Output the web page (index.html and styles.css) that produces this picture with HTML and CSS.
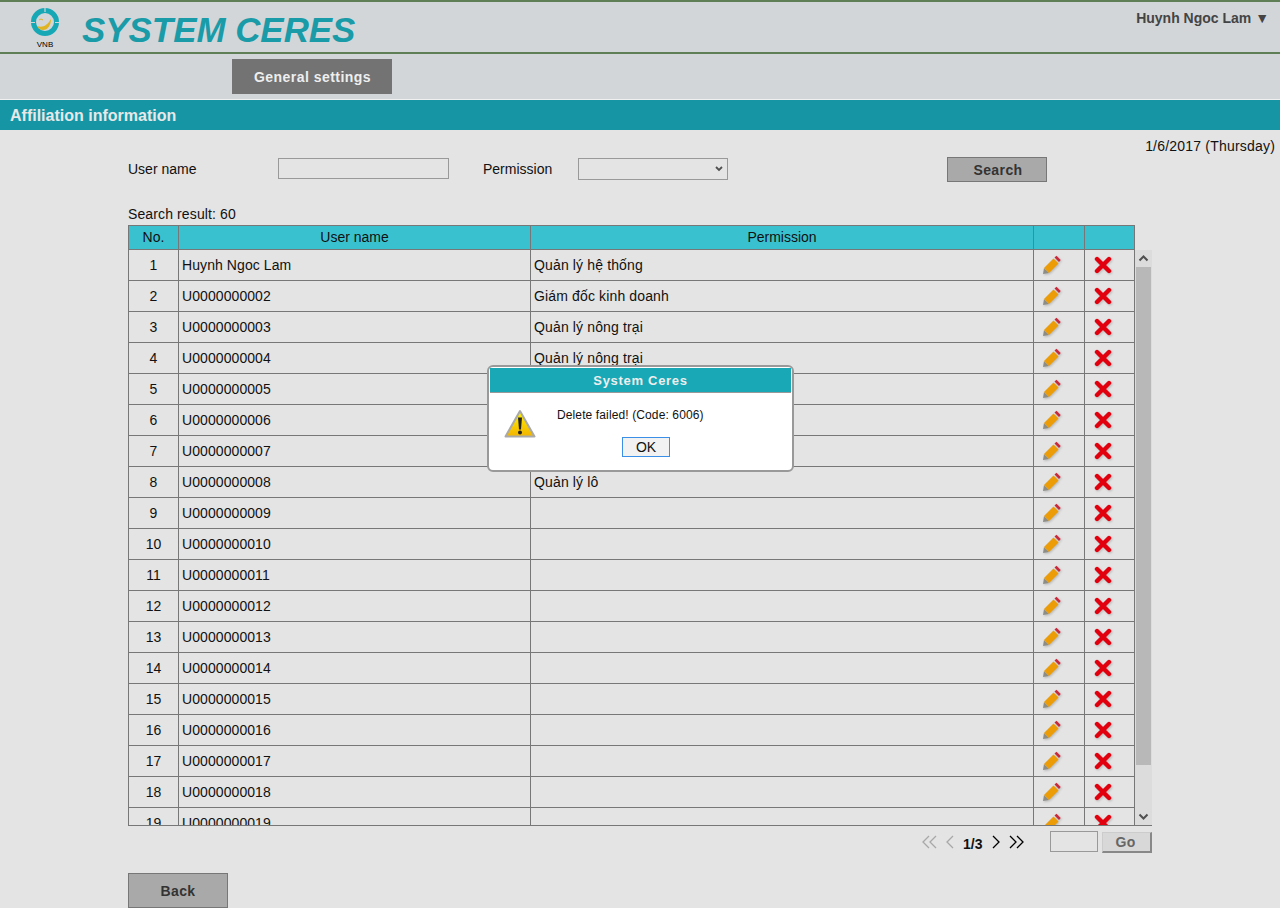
FILE: index.html

```html
<!DOCTYPE html>
<html lang="en">
<head>
  <meta charset="UTF-8" />
  <title>System Ceres</title>
  <link rel="stylesheet" href="styles.css">
</head>
<body>
  <svg class="sprites" width="0" height="0">
    <symbol id="pencil" viewBox="0 0 20 20">
      <polygon points="1,19 2,13 7,18" fill="#8d8d86"/>
      <polygon points="2,13 11.500,3.500 16.500,8.500 7,18" fill="#eb9c06"/>
      <polygon points="12.500,2.500 14.500,0.800 18.700,5 17,7" fill="#c9283a"/>
    </symbol>
    <symbol id="cross" viewBox="0 0 18 18">
      <path d="M3 3 L15 15 M15 3 L3 15" stroke="#e2000f" stroke-width="4.4" stroke-linecap="round"/>
    </symbol>
  </svg>

  <header class="top-bar">
    <svg class="logo" width="50" height="50" viewBox="0 0 50 50">
      <circle cx="25" cy="20" r="11.5" fill="none" stroke="#17a8b6" stroke-width="5"/>
      <path d="M10 20.5 H15 M35 20.5 H40 M25 5 V10" stroke="#d3d6d9" stroke-width="1.2"/>
      <path d="M17 24 C22 26 27 24 31 17 C31 23 28 28 23 28 C20 28 18 26 17 24Z" fill="#e0b420"/>
      <path d="M19 18 Q21 16 23 18" fill="none" stroke="#e0b420" stroke-width="1"/>
      <text x="25" y="45" class="logo-text">VNB</text>
    </svg>
    <div class="brand">SYSTEM CERES</div>
    <div class="user-menu">Huynh Ngoc Lam ▼</div>
  </header>

  <nav class="nav-bar">
    <a class="nav-item">General settings</a>
  </nav>

  <h1 class="page-title">Affiliation information</h1>

  <main class="content">
    <div class="date-line">1/6/2017 (Thursday)</div>

    <div class="search-row">
      <label class="lbl-user">User name</label>
      <input class="txt-user" type="text" />
      <label class="lbl-perm">Permission</label>
      <select class="sel-perm"><option></option></select>
      <button class="btn-search">Search</button>
    </div>

    <div class="result-count">Search result: 60</div>

    <table class="grid grid-head">
      <colgroup><col class="c-no"><col class="c-name"><col class="c-perm"><col class="c-act"><col class="c-del"></colgroup>
      <tr><th>No.</th><th>User name</th><th>Permission</th><th></th><th></th></tr>
    </table>

    <div class="grid-body">
      <div class="grid-view">
        <table class="grid">
          <colgroup><col class="c-no"><col class="c-name"><col class="c-perm"><col class="c-act"><col class="c-del"></colgroup>
          <tr><td class="no">1</td><td>Huynh Ngoc Lam</td><td>Quản lý hệ thống</td><td class="act"><svg class="ic-edit"><use href="#pencil"/></svg></td><td class="act"><svg class="ic-del"><use href="#cross"/></svg></td></tr>
          <tr><td class="no">2</td><td>U0000000002</td><td>Giám đốc kinh doanh</td><td class="act"><svg class="ic-edit"><use href="#pencil"/></svg></td><td class="act"><svg class="ic-del"><use href="#cross"/></svg></td></tr>
          <tr><td class="no">3</td><td>U0000000003</td><td>Quản lý nông trại</td><td class="act"><svg class="ic-edit"><use href="#pencil"/></svg></td><td class="act"><svg class="ic-del"><use href="#cross"/></svg></td></tr>
          <tr><td class="no">4</td><td>U0000000004</td><td>Quản lý nông trại</td><td class="act"><svg class="ic-edit"><use href="#pencil"/></svg></td><td class="act"><svg class="ic-del"><use href="#cross"/></svg></td></tr>
          <tr><td class="no">5</td><td>U0000000005</td><td></td><td class="act"><svg class="ic-edit"><use href="#pencil"/></svg></td><td class="act"><svg class="ic-del"><use href="#cross"/></svg></td></tr>
          <tr><td class="no">6</td><td>U0000000006</td><td></td><td class="act"><svg class="ic-edit"><use href="#pencil"/></svg></td><td class="act"><svg class="ic-del"><use href="#cross"/></svg></td></tr>
          <tr><td class="no">7</td><td>U0000000007</td><td></td><td class="act"><svg class="ic-edit"><use href="#pencil"/></svg></td><td class="act"><svg class="ic-del"><use href="#cross"/></svg></td></tr>
          <tr><td class="no">8</td><td>U0000000008</td><td>Quản lý lô</td><td class="act"><svg class="ic-edit"><use href="#pencil"/></svg></td><td class="act"><svg class="ic-del"><use href="#cross"/></svg></td></tr>
          <tr><td class="no">9</td><td>U0000000009</td><td></td><td class="act"><svg class="ic-edit"><use href="#pencil"/></svg></td><td class="act"><svg class="ic-del"><use href="#cross"/></svg></td></tr>
          <tr><td class="no">10</td><td>U0000000010</td><td></td><td class="act"><svg class="ic-edit"><use href="#pencil"/></svg></td><td class="act"><svg class="ic-del"><use href="#cross"/></svg></td></tr>
          <tr><td class="no">11</td><td>U0000000011</td><td></td><td class="act"><svg class="ic-edit"><use href="#pencil"/></svg></td><td class="act"><svg class="ic-del"><use href="#cross"/></svg></td></tr>
          <tr><td class="no">12</td><td>U0000000012</td><td></td><td class="act"><svg class="ic-edit"><use href="#pencil"/></svg></td><td class="act"><svg class="ic-del"><use href="#cross"/></svg></td></tr>
          <tr><td class="no">13</td><td>U0000000013</td><td></td><td class="act"><svg class="ic-edit"><use href="#pencil"/></svg></td><td class="act"><svg class="ic-del"><use href="#cross"/></svg></td></tr>
          <tr><td class="no">14</td><td>U0000000014</td><td></td><td class="act"><svg class="ic-edit"><use href="#pencil"/></svg></td><td class="act"><svg class="ic-del"><use href="#cross"/></svg></td></tr>
          <tr><td class="no">15</td><td>U0000000015</td><td></td><td class="act"><svg class="ic-edit"><use href="#pencil"/></svg></td><td class="act"><svg class="ic-del"><use href="#cross"/></svg></td></tr>
          <tr><td class="no">16</td><td>U0000000016</td><td></td><td class="act"><svg class="ic-edit"><use href="#pencil"/></svg></td><td class="act"><svg class="ic-del"><use href="#cross"/></svg></td></tr>
          <tr><td class="no">17</td><td>U0000000017</td><td></td><td class="act"><svg class="ic-edit"><use href="#pencil"/></svg></td><td class="act"><svg class="ic-del"><use href="#cross"/></svg></td></tr>
          <tr><td class="no">18</td><td>U0000000018</td><td></td><td class="act"><svg class="ic-edit"><use href="#pencil"/></svg></td><td class="act"><svg class="ic-del"><use href="#cross"/></svg></td></tr>
          <tr><td class="no">19</td><td>U0000000019</td><td></td><td class="act"><svg class="ic-edit"><use href="#pencil"/></svg></td><td class="act"><svg class="ic-del"><use href="#cross"/></svg></td></tr>
        </table>
      </div>
      <div class="scrollbar">
        <svg class="sb-btn" width="17" height="17" viewBox="0 0 17 17"><path d="M4.500 10.500 L8.500 6.500 L12.500 10.500" fill="none" stroke="#505050" stroke-width="2"/></svg>
        <div class="sb-track"><div class="sb-thumb"></div></div>
        <svg class="sb-btn" width="17" height="17" viewBox="0 0 17 17"><path d="M4.500 6.500 L8.500 10.500 L12.500 6.500" fill="none" stroke="#505050" stroke-width="2"/></svg>
      </div>
    </div>

    <div class="pager">
      <svg class="pg-first" width="16" height="14" viewBox="0 0 16 14"><path d="M8 1 L2 7 L8 13 M15 1 L9 7 L15 13" fill="none" stroke="#a8a8a8" stroke-width="1.300"/></svg>
      <svg class="pg-prev" width="8" height="14" viewBox="0 0 8 14"><path d="M7 1 L1 7 L7 13" fill="none" stroke="#a8a8a8" stroke-width="1.300"/></svg>
      <span class="pg-num">1/3</span>
      <svg class="pg-next" width="8" height="14" viewBox="0 0 8 14"><path d="M1 1 L7 7 L1 13" fill="none" stroke="#000" stroke-width="1.300"/></svg>
      <svg class="pg-last" width="16" height="14" viewBox="0 0 16 14"><path d="M1 1 L7 7 L1 13 M8 1 L14 7 L8 13" fill="none" stroke="#000" stroke-width="1.300"/></svg>
      <input class="pg-input" type="text" />
      <button class="btn-go">Go</button>
    </div>

    <button class="btn-back">Back</button>
  </main>

  <!-- message box -->
  <div class="msg-box">
    <div class="msg-title">System Ceres</div>
    <div class="msg-body">
      <svg class="msg-icon" width="32" height="30" viewBox="0 0 32 30">
        <defs>
          <linearGradient id="warn" x1="0" y1="0" x2="0" y2="1">
            <stop offset="0" stop-color="#fff200"/>
            <stop offset="1" stop-color="#f2b400"/>
          </linearGradient>
        </defs>
        <path d="M16 2 L30.500 27.500 H1.500 Z" fill="url(#warn)" stroke="#a9a9a9" stroke-width="2" stroke-linejoin="round"/>
        <path d="M14 8.500 H18 L17 20.500 H15 Z" fill="#222"/>
        <circle cx="16" cy="23.500" r="2" fill="#222"/>
      </svg>
      <div class="msg-main">
        <p class="msg-text">Delete failed! (Code: 6006)</p>
        <button class="btn-ok">OK</button>
      </div>
    </div>
  </div>
</body>
</html>
```

FILE: styles.css

```css
html { background: #fff; }
body { margin: 0; background: #e4e4e4; font-family: "Liberation Sans", Arial, sans-serif; font-size: 14px; color: #111; }
.sprites { position: absolute; }

.top-bar { display: flex; box-sizing: border-box; height: 54px; padding-left: 20px; background: #d3d6d9; border-top: 2px solid #5f7f56; border-bottom: 2px solid #5f7f56; }
.logo { display: block; flex: none; }
.logo-text { font-size: 8px; text-anchor: middle; fill: #000; }
.brand { margin-left: 12px; font-size: 34.9px; line-height: 56px; height: 50px; font-weight: bold; font-style: italic; color: #1a9ba8; }
.user-menu { margin-left: auto; padding: 8px 11px 0 0; font-weight: bold; color: #444; line-height: 16px; }

.nav-bar { box-sizing: border-box; height: 46px; padding: 5px 0 0 232px; background: #d3d6d9; border-bottom: 1px solid #f0f0f0; }
.nav-item { display: block; box-sizing: border-box; width: 160px; height: 35px; padding-left: 1px; line-height: 36px; text-align: center; background: #737373; color: #eee; font-weight: bold; font-size: 14px; letter-spacing: 0.46px; }

.page-title { margin: 0; height: 30px; padding-left: 10px; line-height: 32px; font-size: 16px; font-weight: bold; background: #1696a5; color: #e8e8e8; }

.content { padding: 7px 0 0 128px; width: 1024px; }
.date-line { width: 1147px; text-align: right; line-height: 18px; letter-spacing: 0.2px; }

.search-row { display: flex; align-items: center; box-sizing: border-box; height: 25px; padding-bottom: 2px; margin-top: 2px; margin-bottom: 24px; }
.lbl-user { width: 150px; }
.txt-user { box-sizing: border-box; width: 171px; height: 21px; margin: 0 34px 0 0; padding: 1px 3px; background: #e4e4e4; border: 1px solid #999; }
.lbl-perm { width: 95px; }
.sel-perm { box-sizing: border-box; width: 150px; height: 22px; margin: 1px 219px 0 0; background: #e4e4e4 url("data:image/svg+xml,%3Csvg xmlns='http://www.w3.org/2000/svg' width='8' height='6'%3E%3Cpath d='M1 1 L4 4 L7 1' fill='none' stroke='%23505050' stroke-width='1.800'/%3E%3C/svg%3E") no-repeat right 4px center; border: 1px solid #999; border-radius: 0; appearance: none; font: 14px "Liberation Sans", Arial, sans-serif; }
.btn-search { align-self: flex-start; box-sizing: border-box; width: 100px; height: 25px; padding: 0 0 0 2px; background: #a9a9a9; border: 1px solid #777; font: bold 14px "Liberation Sans", Arial, sans-serif; color: #333; letter-spacing: 0.4px; }

.result-count { line-height: 16px; margin-bottom: 3px; letter-spacing: 0.12px; }

.grid { border-collapse: separate; border-spacing: 0; table-layout: fixed; width: 1007px; }
.c-no { width: 51px; }
.c-name { width: 352px; }
.c-perm { width: 503px; }
.c-act { width: 51px; }
.c-del { width: 50px; }
.grid th, .grid td { box-sizing: border-box; padding: 0; border-right: 1px solid #777; border-bottom: 1px solid #777; }
.grid th:first-child, .grid td:first-child { border-left: 1px solid #777; }
.grid th { height: 25px; padding-bottom: 2px; background: #3ac1d0; font-weight: normal; border-top: 1px solid #777; }
.grid td { height: 31px; padding-left: 3px; }
.grid td:nth-child(2) { letter-spacing: 0.08px; }
.grid td:nth-child(3) { letter-spacing: 0.14px; }
.grid td.no { padding-left: 0; text-align: center; }
.grid td.act { padding: 0 0 0 8px; }
.grid td.act + td.act { padding-left: 9px; }
.ic-edit { display: block; width: 20px; height: 20px; filter: drop-shadow(1px 1px 1px rgba(0,0,0,0.2)); }
.ic-del { display: block; width: 18px; height: 18px; filter: drop-shadow(1px 1px 1px rgba(0,0,0,0.2)); }

.grid-body { display: flex; width: 1024px; height: 576px; box-sizing: border-box; border-bottom: 1px solid #777; }
.grid-view { width: 1007px; overflow: hidden; }
.scrollbar { display: flex; flex-direction: column; width: 17px; background: #dcdcdc; }
.sb-btn { display: block; flex: none; }
.sb-track { flex: 1; }
.sb-thumb { height: 498px; margin: 0 1px; background: #b8b8b8; }

.pager { display: flex; align-items: center; justify-content: flex-end; width: 1024px; height: 22px; margin: 5px 0 20px; }
.pg-first { margin-right: 9px; }
.pg-prev { margin-right: 9px; }
.pg-num { width: 20px; margin: 4px 9px 0 0; font-weight: bold; color: #111; }
.pg-next { margin-right: 9px; }
.pg-last { margin-right: 25px; }
.pg-input { box-sizing: border-box; width: 48px; height: 21px; margin: 0 4px 1px 0; background: #e4e4e4; border: 1px solid #999; }
.btn-go { box-sizing: border-box; width: 50px; height: 21px; padding: 0 2px 0 0; background: #d8d8d8; border: 1px solid #ccc; border-right: 2px solid #888; border-bottom: 2px solid #888; font: bold 14px "Liberation Sans", Arial, sans-serif; color: #666; letter-spacing: 0.4px; }

.btn-back { display: block; box-sizing: border-box; width: 100px; height: 35px; padding: 0; background: #a9a9a9; border: 1px solid #777; font: bold 14px "Liberation Sans", Arial, sans-serif; color: #333; letter-spacing: 0.4px; }

.msg-box { position: absolute; left: 487px; top: 365px; box-sizing: border-box; width: 307px; height: 107px; padding: 1px; background: #fff; border: 2px solid #999; border-radius: 6px; }
.msg-title { height: 24px; line-height: 25px; text-align: center; background: #19a8b5; color: #eee; font-weight: bold; font-size: 13px; letter-spacing: 0.7px; border-bottom: 1px solid #999; }
.msg-body { display: flex; padding: 15px 0 0 14px; }
.msg-icon { flex: none; margin-top: 1px; }
.msg-main { flex: 1; }
.msg-text { margin: 0 0 15px 21px; font-size: 12px; line-height: 14px; letter-spacing: 0.12px; color: #111; }
.btn-ok { display: block; box-sizing: border-box; width: 48px; height: 20px; margin-left: 86px; padding: 0; background: #f2f2f2; border: 1px solid #3c8fe6; font: 14px "Liberation Sans", Arial, sans-serif; color: #111; }
```
